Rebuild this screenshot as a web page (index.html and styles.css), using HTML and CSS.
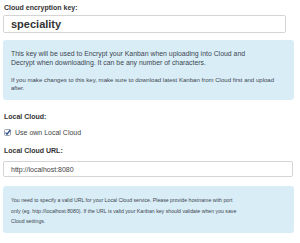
FILE: index.html
```html
<!DOCTYPE html>
<html>
<head>
<meta charset="utf-8">
<link rel="stylesheet" href="styles.css">
</head>
<body>
<div class="form">
  <div class="label label-first">Cloud encryption key:</div>
  <div class="input input-key">speciality</div>
  <div class="alert alert-key">
    <p class="alert-main">This key will be used to Encrypt your Kanban when uploading into Cloud and<br>Decrypt when downloading. It can be any number of characters.</p>
    <p class="alert-small">If you make changes to this key, make sure to download latest Kanban from Cloud first and upload<br>after.</p>
  </div>
  <div class="label label-local">Local Cloud:</div>
  <div class="check-row">
    <span class="checkbox"><svg width="7" height="7" viewBox="0 0 7 7"><rect x="0.5" y="0.5" width="6" height="6" rx="1" fill="#fff" stroke="#9aa4b0"/><path d="M1.6 3.6 L3 5.2 L6.4 0.8" fill="none" stroke="#2a4a8c" stroke-width="1.3"/></svg></span>
    <span class="check-text">Use own Local Cloud</span>
  </div>
  <div class="label label-url">Local Cloud URL:</div>
  <div class="input input-url">http://localhost:8080</div>
  <div class="alert alert-url">
    <p class="alert-small2">You need to specify a valid URL for your Local Cloud service. Please provide hostname with port<br>only (eg. http://localhost:8080). If the URL is valid your Kanban key should validate when you save<br>Cloud settings.</p>
  </div>
</div>
</body>
</html>
```
FILE: styles.css
```css
html, body {
  margin: 0;
  padding: 0;
  background: #fff;
}
body {
  font-family: "Liberation Sans", Arial, sans-serif;
  color: #333;
}
.form {
  padding: 0 3px;
  display: flex;
  flex-direction: column;
  align-items: flex-start;
}
.label {
  font-weight: bold;
  font-size: 7px;
  line-height: 9px;
  color: #333;
  padding-left: 1px;
}
.label-first { margin-top: 3px; }
.label-local { margin-top: 12px; }
.label-url { margin-top: 9px; }
.input {
  box-sizing: border-box;
  border: 1px solid #d4d4d4;
  border-radius: 2px;
  background: #fff;
  padding-left: 7px;
  display: flex;
  align-items: center;
}
.input-key {
  margin-top: 3px;
  width: 283px;
  height: 18px;
  font-size: 11px;
  font-weight: bold;
  color: #333;
}
.input-url {
  margin-top: 6.5px;
  width: 290px;
  height: 16px;
  font-size: 7px;
  color: #444;
}
.alert {
  box-sizing: border-box;
  width: 291px;
  background: #d9edf7;
  border-radius: 3px;
  padding: 0 0 0 8px;
  color: #3c4650;
}
.alert p { margin: 0; white-space: nowrap; }
.alert-key {
  margin-top: 7px;
  height: 60px;
  padding-top: 9px;
}
.alert-main {
  font-size: 6.9px;
  line-height: 9px;
}
.alert-small {
  font-size: 6.05px;
  line-height: 8px;
  margin-top: 9px !important;
}
.alert-url {
  margin-top: 9px;
  height: 47px;
  padding-top: 9px;
}
.alert-small2 {
  font-size: 5.2px;
  line-height: 10.5px;
}
.check-row {
  margin-top: 6.5px;
  display: flex;
  align-items: center;
  height: 9px;
  padding-left: 1px;
}
.checkbox {
  display: flex;
  width: 7px;
  height: 7px;
}
.check-text {
  margin-left: 4px;
  font-size: 7px;
  line-height: 9px;
  color: #444;
}
```
